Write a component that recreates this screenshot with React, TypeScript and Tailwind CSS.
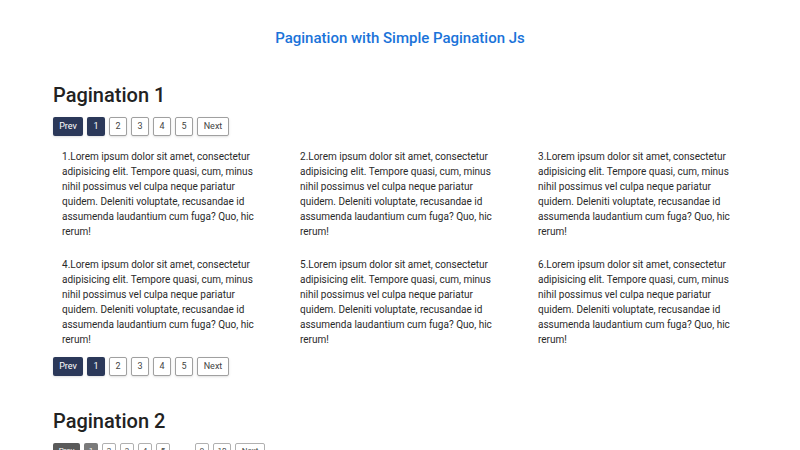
const lorem =
  'Lorem ipsum dolor sit amet, consectetur adipisicing elit. Tempore quasi, cum, minus nihil possimus vel culpa neque pariatur quidem. Deleniti voluptate, recusandae id assumenda laudantium cum fuga? Quo, hic rerum!'

function PagerOne() {
  return (
    <div className="flex items-center gap-[4px] text-[9px]">
      <button className="h-[19px] w-[30px] rounded-[2px] bg-[#2b3859] text-white shadow-sm">Prev</button>
      <button className="h-[19px] w-[18px] rounded-[2px] bg-[#2b3859] text-white shadow-sm">1</button>
      {['2', '3', '4', '5'].map((n) => (
        <button
          key={n}
          className="h-[19px] w-[18px] rounded-[2px] border border-[#a0a0a0] bg-white text-[#444] shadow-sm"
        >
          {n}
        </button>
      ))}
      <button className="h-[19px] w-[32px] rounded-[2px] border border-[#a0a0a0] bg-white text-[#444] shadow-sm">
        Next
      </button>
    </div>
  )
}

function PagerTwo() {
  return (
    <div className="flex items-center gap-[4px] text-[8px]">
      <button className="h-[16px] w-[27px] rounded-[2px] bg-[#5a5a5a] text-white">Prev</button>
      <button className="h-[16px] w-[14px] rounded-[2px] bg-[#7a7a7a] text-white">1</button>
      {['2', '3', '4', '5'].map((n) => (
        <button
          key={n}
          className="h-[16px] w-[14px] rounded-[2px] border border-[#b0b0b0] bg-white text-[#444]"
        >
          {n}
        </button>
      ))}
      <span className="w-[17px] text-center text-[#444]">...</span>
      <button className="h-[16px] w-[14px] rounded-[2px] border border-[#b0b0b0] bg-white text-[#444]">9</button>
      <button className="h-[16px] w-[18px] rounded-[2px] border border-[#b0b0b0] bg-white text-[#444]">10</button>
      <button className="h-[16px] w-[30px] rounded-[2px] border border-[#b0b0b0] bg-white text-[#444]">Next</button>
    </div>
  )
}

export default function App() {
  const items = [1, 2, 3, 4, 5, 6]

  return (
    <div className="h-[450px] w-[800px] overflow-hidden bg-white font-['Roboto',sans-serif] text-[#222]">
      <h1 className="pt-[29px] text-center text-[15px] leading-[18px] font-medium text-[#1a73d9]">
        Pagination with Simple Pagination Js
      </h1>

      <section className="ml-[53px] w-[714px]">
        <h2 className="mt-[36px] text-[20px] leading-[24px] font-medium">Pagination 1</h2>
        <div className="mt-[10px]">
          <PagerOne />
        </div>

        <div className="mt-[13px] grid grid-cols-3 gap-y-[18px]">
          {items.map((i) => (
            <div key={i} className="pl-[9px]">
              <p className="w-[205px] text-[10px] leading-[15px] text-[#2a2a2a]">
                {i}.{lorem}
              </p>
            </div>
          ))}
        </div>

        <div className="mt-[10px]">
          <PagerOne />
        </div>

        <h2 className="mt-[33px] text-[20px] leading-[24px] font-medium">Pagination 2</h2>
        <div className="mt-[10px]">
          <PagerTwo />
        </div>
      </section>
    </div>
  )
}
